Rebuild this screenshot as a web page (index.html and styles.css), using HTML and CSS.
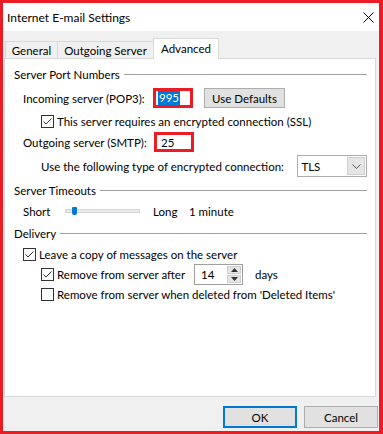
FILE: index.html
```html
<!DOCTYPE html>
<html lang="en">
<head>
    <meta charset="UTF-8">
    <meta name="viewport" content="width=device-width, initial-scale=1.0">
    <title>Internet E-mail Settings</title>
    <link rel="stylesheet" href="styles.css">
</head>
<body>
    <div class="window">
        <div class="titlebar">
            <span class="title">Internet E-mail Settings</span>
            <svg class="close" width="11" height="11" viewBox="0 0 11 11">
                <path d="M0.5 0.5 L10.5 10.5 M10.5 0.5 L0.5 10.5" stroke="#000" stroke-width="1" fill="none"/>
            </svg>
        </div>
        <div class="body">
            <div class="tabs">
                <div class="tab tab-general">General</div>
                <div class="tab tab-outgoing">Outgoing Server</div>
                <div class="tab tab-advanced active">Advanced</div>
            </div>
            <div class="panel">
                <div class="group-title">Server Port Numbers<span class="rule"></span></div>
                <div class="row row-port">
                    <span class="port-label">Incoming server (POP3):</span>
                    <span class="marked"><span class="selected">995</span></span>
                    <span class="button defaults">Use Defaults</span>
                </div>
                <div class="row row-check sub">
                    <span class="checkbox checked"><svg width="11" height="11" viewBox="0 0 11 11"><path d="M1.5 5.5 L4 8 L9.5 2.5" stroke="#333" stroke-width="1" fill="none"/></svg></span>
                    <span class="check-text">This server requires an encrypted connection (SSL)</span>
                </div>
                <div class="row row-port row-outgoing">
                    <span class="port-label">Outgoing server (SMTP):</span>
                    <span class="marked marked-smtp">25</span>
                </div>
                <div class="row row-enc sub">
                    <span class="enc-label">Use the following type of encrypted connection:</span>
                    <span class="select">
                        <span class="select-value">TLS</span>
                        <span class="select-arrow"><svg width="9" height="5" viewBox="0 0 9 5"><path d="M0.5 0.5 L4.5 4.5 L8.5 0.5" stroke="#555" stroke-width="1" fill="none"/></svg></span>
                    </span>
                </div>

                <div class="group-title group-timeouts">Server Timeouts<span class="rule"></span></div>
                <div class="row row-slider">
                    <span class="slider-label">Short</span>
                    <span class="track"><span class="thumb"></span></span>
                    <span class="long-label">Long</span>
                    <span>1 minute</span>
                </div>

                <div class="group-title group-delivery">Delivery<span class="rule"></span></div>
                <div class="row row-check row-leave">
                    <span class="checkbox checked"><svg width="11" height="11" viewBox="0 0 11 11"><path d="M1.5 5.5 L4 8 L9.5 2.5" stroke="#333" stroke-width="1" fill="none"/></svg></span>
                    <span class="check-text">Leave a copy of messages on the server</span>
                </div>
                <div class="row row-remove sub">
                    <span class="checkbox checked"><svg width="11" height="11" viewBox="0 0 11 11"><path d="M1.5 5.5 L4 8 L9.5 2.5" stroke="#333" stroke-width="1" fill="none"/></svg></span>
                    <span class="check-text remove-label">Remove from server after</span>
                    <span class="spinner">
                        <span class="spin-value">14</span>
                        <span class="spin-buttons">
                            <span class="spin-btn"><svg width="7" height="4" viewBox="0 0 7 4"><path d="M0 4 L3.5 0 L7 4 Z" fill="#333"/></svg></span>
                            <span class="spin-btn"><svg width="7" height="4" viewBox="0 0 7 4"><path d="M0 0 L3.5 4 L7 0 Z" fill="#333"/></svg></span>
                        </span>
                    </span>
                    <span class="days">days</span>
                </div>
                <div class="row row-check row-deleted sub">
                    <span class="checkbox"></span>
                    <span class="check-text">Remove from server when deleted from 'Deleted Items'</span>
                </div>
            </div>
            <div class="footer">
                <span class="button dialog-btn default">OK</span>
                <span class="button dialog-btn">Cancel</span>
            </div>
        </div>
    </div>
</body>
</html>
```

FILE: styles.css
```css
body {
    margin: 0;
    font-family: Lato, "Noto Sans", sans-serif;
    font-size: 11.5px;
    color: #000;
    background-color: #fff;
    white-space: nowrap;
}
.window {
    width: 383px;
    height: 434px;
    box-sizing: border-box;
    border: 3px solid #ed1c24;
    border-right-width: 4px;
    display: flex;
    flex-direction: column;
}
.titlebar {
    height: 28px;
    background-color: #fff;
    display: flex;
    align-items: center;
    justify-content: space-between;
    padding: 0 5px 0 4px;
}
.title {
    font-size: 12px;
}
.close {
    display: block;
}
.body {
    flex: 1;
    background-color: #f0f0f0;
    display: flex;
    flex-direction: column;
    padding: 7px 0 0 1px;
}
.tabs {
    height: 21px;
    display: flex;
    align-items: flex-end;
    padding-left: 1px;
    position: relative;
    z-index: 1;
}
.tab {
    box-sizing: border-box;
    height: 17px;
    margin-bottom: 1px;
    border: 1px solid #d9d9d9;
    border-bottom: none;
    background-color: #f0f0f0;
    display: flex;
    align-items: center;
    justify-content: center;
    padding-top: 1px;
    margin-left: -1px;
}
.tab-general {
    width: 53px;
    margin-left: 0;
}
.tab-outgoing {
    width: 97px;
}
.tab.active {
    width: 66px;
    height: 21px;
    margin-bottom: 0;
    background-color: #fff;
    padding-top: 0;
    padding-bottom: 1px;
}
.panel {
    flex: 1;
    margin: -1px 3px 0 0;
    background-color: #fff;
    border: 1px solid #d9d9d9;
    padding: 7px 8px 0 9px;
}
.group-title {
    height: 16px;
    display: flex;
    align-items: center;
}
.rule {
    flex: 1;
    height: 1px;
    margin-left: 4px;
    background-color: #a0a0a0;
}
.group-timeouts {
    margin-top: 5px;
}
.group-delivery {
    margin-top: 6px;
}
.row {
    display: flex;
    align-items: center;
    padding-left: 9px;
}
.row.sub {
    padding-left: 27px;
}
.row-port {
    height: 22px;
    margin-top: 5px;
}
.row-outgoing {
    margin-top: 2px;
}
.port-label {
    width: 130px;
}
.marked {
    box-sizing: border-box;
    width: 40px;
    height: 20px;
    border: 3px solid #ed1c24;
    padding-left: 2px;
    display: flex;
    align-items: center;
}
.marked-smtp {
    margin-left: 1px;
    padding-left: 4px;
}
.selected {
    background-color: #0078d7;
    color: #fff;
    padding: 0 1px;
    line-height: 14px;
}
.button {
    box-sizing: border-box;
    background-color: #e1e1e1;
    border: 1px solid #adadad;
    display: flex;
    align-items: center;
    justify-content: center;
}
.defaults {
    width: 81px;
    height: 20px;
    margin-left: 11px;
}
.row-check {
    height: 16px;
    margin-top: 4px;
}
.checkbox {
    box-sizing: border-box;
    width: 13px;
    height: 13px;
    border: 1px solid #333;
    background-color: #fff;
    display: flex;
    align-items: center;
    justify-content: center;
}
.checkbox svg {
    display: block;
}
.check-text {
    margin-left: 3px;
}
.row-enc {
    height: 22px;
    margin-top: 2px;
}
.enc-label {
    width: 258px;
}
.select {
    box-sizing: border-box;
    width: 70px;
    height: 22px;
    border: 1px solid #adadad;
    background-color: #fff;
    display: flex;
    align-items: center;
    justify-content: space-between;
    padding: 0 1px 0 3px;
}
.select-arrow {
    box-sizing: border-box;
    width: 18px;
    height: 18px;
    background-color: #e5e5e5;
    border: 1px solid #cfcfcf;
    display: flex;
    align-items: center;
    justify-content: center;
}
.row-slider {
    height: 16px;
    margin-top: 5px;
}
.slider-label {
    width: 42px;
}
.track {
    box-sizing: border-box;
    width: 75px;
    height: 4px;
    background-color: #e7eaea;
    border: 1px solid #d6d6d6;
    position: relative;
}
.thumb {
    position: absolute;
    left: 6px;
    top: -3px;
    width: 5px;
    height: 8px;
    background-color: #0078d7;
    border-radius: 1px 1px 2px 2px;
}
.long-label {
    width: 36px;
    margin-left: 13px;
}
.row-leave {
    margin-top: 5px;
}
.row-remove {
    height: 22px;
    margin-top: 1px;
}
.remove-label {
    width: 137px;
}
.spinner {
    box-sizing: border-box;
    width: 49px;
    height: 21px;
    border: 1px solid #a0a0a0;
    background-color: #fff;
    display: flex;
    justify-content: space-between;
    padding: 1px;
}
.spin-value {
    padding-left: 5px;
    display: flex;
    align-items: center;
}
.spin-buttons {
    width: 14px;
    display: flex;
    flex-direction: column;
    gap: 1px;
}
.spin-btn {
    flex: 1;
    background-color: #e5e5e5;
    border: 1px solid #cfcfcf;
    display: flex;
    align-items: center;
    justify-content: center;
}
.spin-btn svg {
    display: block;
}
.days {
    margin-left: 12px;
}
.row-deleted {
    margin-top: 1px;
}
.footer {
    height: 34px;
    box-sizing: border-box;
    padding: 9px 1px 0 0;
    display: flex;
    justify-content: flex-end;
    align-items: flex-start;
    gap: 7px;
}
.dialog-btn {
    width: 74px;
    height: 22px;
}
.dialog-btn.default {
    border: 2px solid #0078d7;
}
```
